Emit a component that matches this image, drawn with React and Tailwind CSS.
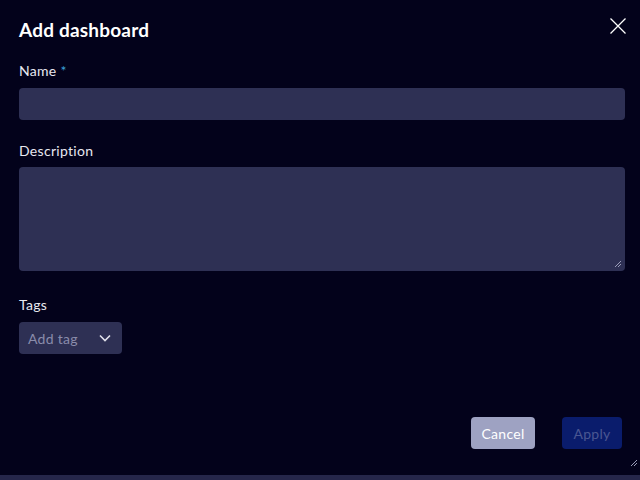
import React from "react";

function Grip({ className }) {
  return (
    <svg className={className} width="8" height="8" viewBox="0 0 8 8">
      <path d="M7 1 L1 7 M7 4 L4 7" stroke="#9a9cb8" strokeWidth="1" />
    </svg>
  );
}

export default function App() {
  return (
    <div
      className="w-[640px] h-[480px] flex flex-col bg-[#03021b] text-white overflow-hidden"
      style={{ fontFamily: "Lato, 'Noto Sans', sans-serif" }}
    >
      <div className="relative h-[475px] flex flex-col px-[19px]">
        <div className="flex items-center justify-between pt-[18px] h-[42px]">
          <h1 className="text-[19px] font-bold leading-[24px] tracking-[0.2px]">Add dashboard</h1>
          <button className="mr-[-6px] mt-[-8px]">
            <svg width="18" height="18" viewBox="0 0 18 18">
              <path d="M1.5 1.5 L16.5 16.5 M16.5 1.5 L1.5 16.5" stroke="#ffffff" strokeWidth="1.3" />
            </svg>
          </button>
        </div>

        <label className="mt-[19px] text-[14px] leading-[20px] tracking-[0.3px] text-[#e8e8f0]">
          Name <span className="text-[#3aa0d8]">*</span>
        </label>
        <div className="mt-[7px] h-[32px] w-[606px] rounded-[4px] bg-[#2e3054]" />

        <label className="mt-[21px] text-[14px] leading-[20px] tracking-[0.3px] text-[#e8e8f0]">Description</label>
        <div className="relative mt-[6px] h-[104px] w-[606px] rounded-[4px] bg-[#2e3054]">
          <Grip className="absolute right-[3px] bottom-[3px]" />
        </div>

        <label className="mt-[24px] text-[14px] leading-[20px] tracking-[0.3px] text-[#e8e8f0]">Tags</label>
        <div className="mt-[7px] h-[32px] w-[103px] rounded-[4px] bg-[#2e3054] flex items-center justify-between pl-[9px] pr-[10px]">
          <span className="text-[14px] tracking-[0.3px] text-[#8a8cab]">Add tag</span>
          <svg width="14" height="14" viewBox="0 0 14 14">
            <path d="M2 4.5 L7 9.5 L12 4.5" stroke="#e0e0ea" strokeWidth="1.6" fill="none" />
          </svg>
        </div>

        <div className="mt-[63px] flex justify-end gap-[27px] mr-[-1px]">
          <button className="h-[32px] w-[64px] rounded-[4px] bg-[#9ea2c2] text-[14px] tracking-[0.3px] text-white">Cancel</button>
          <button className="h-[32px] w-[60px] rounded-[4px] bg-[#0a1c6c] text-[14px] tracking-[0.3px] text-[#4b5792]">Apply</button>
        </div>

        <Grip className="absolute right-[2px] bottom-[8px]" />
      </div>
      <div className="h-[5px] bg-[#25264a]" />
    </div>
  );
}
